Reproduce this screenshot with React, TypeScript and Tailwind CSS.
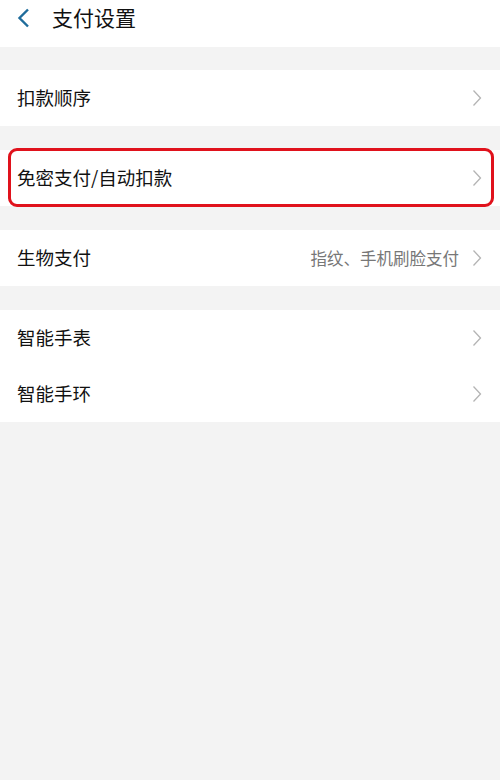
import { Fragment } from 'react';

type Row = { label: string; value?: string; highlight?: boolean };

const groups: Row[][] = [
  [{ label: '扣款顺序' }],
  [{ label: '免密支付/自动扣款', highlight: true }],
  [{ label: '生物支付', value: '指纹、手机刷脸支付' }],
  [{ label: '智能手表' }, { label: '智能手环' }],
];

function Chevron() {
  return (
    <svg width="10" height="18" viewBox="0 0 10 18" className="shrink-0">
      <path d="M1.5 1.5 L8.5 9 L1.5 16.5" fill="none" stroke="#b4b4b4" strokeWidth="1.3" />
    </svg>
  );
}

function SettingRow({ row }: { row: Row }) {
  return (
    <div className="relative bg-white">
      <div className="flex h-[56px] items-center pl-[17px] pr-[18px]">
        <span className="flex-1 text-[18.5px] text-[#111]">{row.label}</span>
        {row.value && <span className="mr-[13px] text-[16.5px] text-[#777]">{row.value}</span>}
        <Chevron />
      </div>
      {row.highlight && (
        <div className="pointer-events-none absolute -top-[2px] -bottom-[1px] left-[8px] right-[6px] rounded-[9px] border-[3.5px] border-[#e0121c]" />
      )}
    </div>
  );
}

export default function App() {
  return (
    <div
      className="min-h-[780px] bg-[#f3f3f3]"
      style={{ fontFamily: '"Noto Sans CJK SC", "Noto Sans", sans-serif' }}
    >
      <div className="h-[47px] bg-white">
        <div className="flex h-[36px] items-center">
          <svg width="14" height="20" viewBox="0 0 14 20" className="ml-[17px]">
            <path d="M11 1.5 L2.5 10 L11 18.5" fill="none" stroke="#1f6c9b" strokeWidth="2.4" />
          </svg>
          <span className="ml-[21px] text-[21px] text-[#111]">支付设置</span>
        </div>
      </div>
      {groups.map((g, gi) => (
        <Fragment key={gi}>
          <div className={gi === 0 ? 'h-[23px]' : 'h-[24px]'} />
          {g.map((r, ri) => (
            <SettingRow key={ri} row={r} />
          ))}
        </Fragment>
      ))}
    </div>
  );
}
